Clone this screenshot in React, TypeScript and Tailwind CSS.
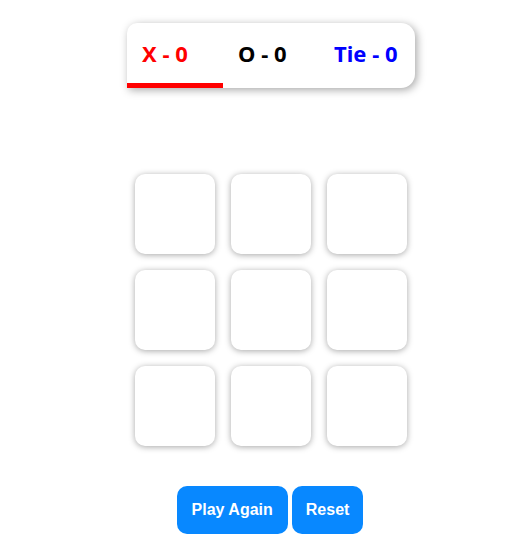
import React from 'react';

const scores = [
  { label: 'X', value: 0, color: 'text-[#ff0000]', active: true },
  { label: 'O', value: 0, color: 'text-black', active: false },
  { label: 'Tie', value: 0, color: 'text-[#0000ff]', active: false },
];

export default function App() {
  const cells = Array.from({ length: 9 });

  return (
    <div className="min-h-screen bg-white flex flex-col items-center pl-[10px] pt-[23px] font-['Liberation_Sans',Arial,sans-serif]">
      {/* score board */}
      <div className="flex w-[288px] h-[65px] bg-white rounded-tl-[10px] rounded-r-[14px] shadow-[2px_2px_8px_rgba(0,0,0,0.35)]">
        {scores.map((s) => (
          <div
            key={s.label}
            className={`w-[96px] flex items-center pl-[15px] border-b-[5px] ${s.active ? 'border-[#ff0000]' : 'border-transparent'}`}
          >
            <span className={`font-['Noto_Sans',sans-serif] font-bold text-[22px] leading-none whitespace-pre ${s.color}`}>
              {s.label} - {s.value}
            </span>
          </div>
        ))}
      </div>

      {/* board */}
      <div className="grid grid-cols-3 gap-4 mt-[86px]">
        {cells.map((_, i) => (
          <div
            key={i}
            className="w-[80px] h-[80px] bg-white rounded-[10px] shadow-[0_1px_6px_rgba(0,0,0,0.35)]"
          />
        ))}
      </div>

      {/* controls */}
      <div className="flex gap-[4px] mt-[40px] -ml-[2px]">
        <button className="h-[48px] px-[15px] rounded-[10px] bg-[#0888ff] text-white font-bold text-base">
          Play Again
        </button>
        <button className="h-[48px] px-[14px] rounded-[10px] bg-[#0888ff] text-white font-bold text-base">
          Reset
        </button>
      </div>
    </div>
  );
}
